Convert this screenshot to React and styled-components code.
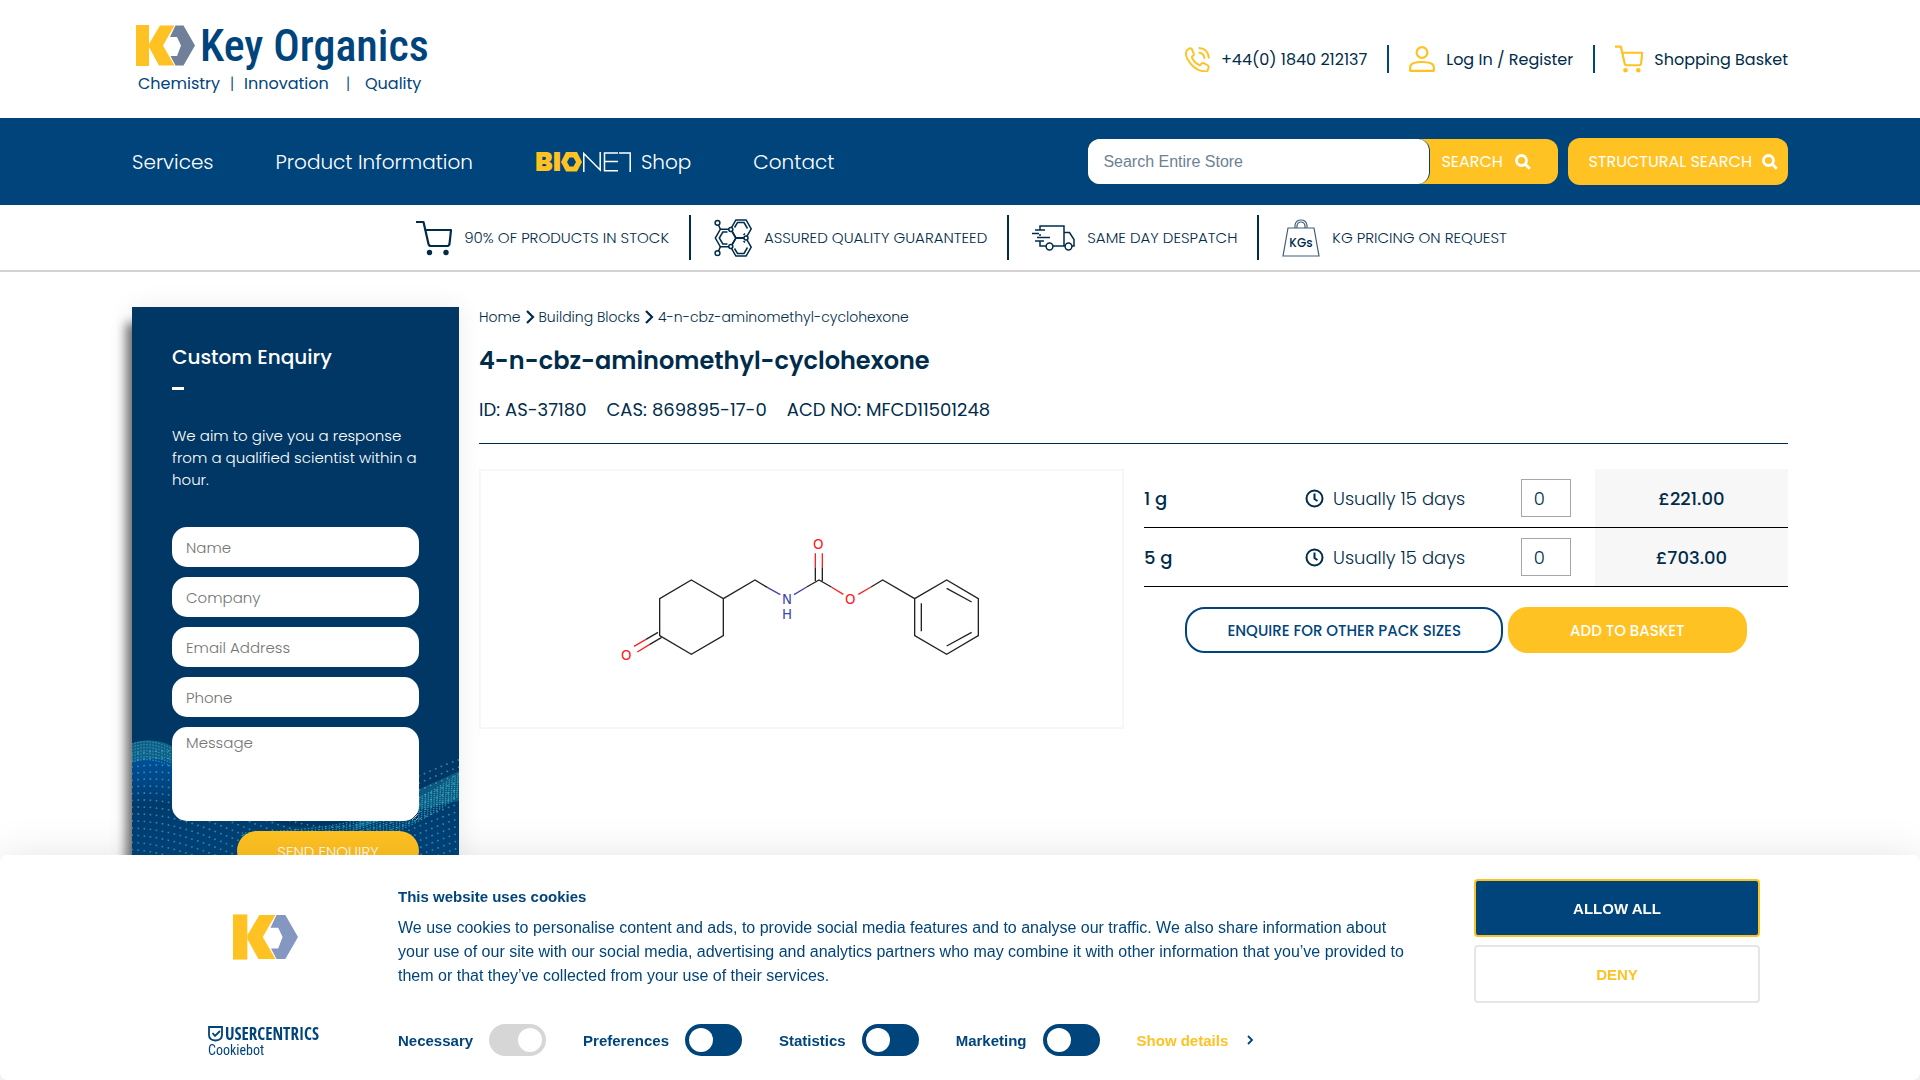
import React from 'react';
import styled, { createGlobalStyle, css } from 'styled-components';

const navy = '#002c4b';
const blue = '#00447c';
const deep = '#003764';
const gold = '#ffc222';
const sans = `'Poppins', Inter, 'Open Sans', sans-serif`;
const arial = `'Liberation Sans', Arial, sans-serif`;

const GlobalStyle = createGlobalStyle`
  *, *::before, *::after { box-sizing: border-box; }
  body { margin: 0; background: #fff; }
  h1, h2, p, ul, dl, dd, dt { margin: 0; padding: 0; }
  a { color: inherit; text-decoration: none; }
  button, input, textarea { font-family: inherit; }
`;

const Page = styled.div`
  height: 100vh;
  overflow: hidden;
  color: ${navy};
  font-family: ${sans};
  font-size: 16px;
  font-weight: 300;
`;

/* ---------- Header ---------- */

const Header = styled.header`
  display: flex;
  align-items: center;
  justify-content: space-between;
  height: 118px;
  padding: 0 132px;
`;

const LogoLink = styled.a`
  display: flex;
  padding-left: 4px;
`;

const Tools = styled.div`
  display: flex;
  align-items: center;
`;

const Tool = styled.a`
  display: flex;
  align-items: center;
  gap: 11px;
  height: 28px;
  padding-left: 20px;
  font-weight: 400;
  & + & {
    margin-left: 20px;
    border-left: 2px solid ${blue};
  }
`;

const NavBar = styled.div`
  display: flex;
  align-items: center;
  justify-content: space-between;
  height: 87px;
  padding: 0 132px;
  background: ${blue};
`;

const NavLinks = styled.nav`
  display: flex;
  align-items: center;
  gap: 62px;
  color: #fff;
  font-size: 20px;
`;

const NavLink = styled.a`
  display: flex;
  align-items: center;
  gap: 10px;
`;

const SearchArea = styled.div`
  display: flex;
  align-items: center;
  gap: 10px;
`;

const SearchForm = styled.form`
  display: flex;
  width: 470px;
  height: 45px;
  border-radius: 12px;
  background: ${gold};
`;

const SearchInput = styled.input`
  width: 342px;
  padding: 0 15px;
  border: 1px solid ${blue};
  border-width: 0 1px 0 0;
  border-radius: 12px;
  background: #fff;
  font-family: ${arial};
  font-size: 16px;
  outline: none;
  &::placeholder { color: #6c8296; opacity: 1; }
`;

const searchButton = css`
  display: flex;
  align-items: center;
  border: 0;
  background: transparent;
  color: #fff;
  cursor: pointer;
  font-size: 16px;
  font-weight: 400;
`;

const SearchSubmit = styled.button`
  ${searchButton}
  gap: 12px;
  padding: 0 11px;
`;

const StructuralButton = styled.button`
  ${searchButton}
  gap: 10px;
  height: 47px;
  padding: 0 10px 0 20px;
  border-radius: 12px;
  background: ${gold};
`;

const Usps = styled.ul`
  display: flex;
  align-items: center;
  justify-content: center;
  height: 67px;
  border-bottom: 2px solid #d3d3d3;
  list-style: none;
`;

const Usp = styled.li`
  display: flex;
  align-items: center;
  gap: 12px;
  height: 45px;
  padding: 0 20px 0 23px;
  font-size: 15px;
  & + & { border-left: 2px solid ${navy}; }
`;

/* ---------- Body ---------- */

const Main = styled.main`
  display: grid;
  grid-template-columns: 327px minmax(0, 1fr);
  gap: 20px;
  align-items: start;
  padding: 35px 132px 0;
`;

const Enquiry = styled.aside`
  position: relative;
  padding: 37px 40px 40px;
  background: ${deep};
  box-shadow: -10px 12px 10px -4px rgba(0, 0, 0, 0.55), 0 0 24px rgba(0, 0, 0, 0.08);
  color: #fff;
`;

const Waves = styled.svg`
  position: absolute;
  left: 0;
  bottom: 0;
  width: 100%;
  height: 190px;
`;

const EnquiryTitle = styled.h2`
  font-size: 20px;
  font-weight: 500;
  line-height: 26px;
`;

const Dash = styled.div`
  width: 12px;
  height: 3px;
  margin: 17px 0 35px;
  background: #fff;
`;

const EnquiryText = styled.p`
  margin-bottom: 36px;
  font-size: 15px;
  line-height: 22px;
`;

const EnquiryForm = styled.form`
  position: relative;
  display: flex;
  flex-direction: column;
  gap: 10px;
`;

const field = css`
  display: block;
  width: 100%;
  border: 0;
  border-radius: 15px;
  background: #fff;
  color: ${navy};
  font-size: 15px;
  font-weight: 300;
  outline: none;
  &::placeholder { color: #757575; opacity: 1; }
`;

const Field = styled.input`
  ${field}
  height: 40px;
  padding: 0 14px;
`;

const Area = styled.textarea`
  ${field}
  height: 94px;
  padding: 4px 14px;
`;

const SendButton = styled.button`
  align-self: flex-end;
  width: 182px;
  height: 40px;
  border: 0;
  border-radius: 20px;
  background: ${gold};
  color: #fff;
  font-size: 15px;
  font-weight: 300;
`;

const Crumbs = styled.nav`
  display: flex;
  align-items: center;
  gap: 3px;
  height: 20px;
  font-size: 14px;
`;

const ProductTitle = styled.h1`
  margin-top: 18px;
  font-size: 24px;
  font-weight: 600;
  line-height: 32px;
`;

const Codes = styled.dl`
  display: flex;
  gap: 20px;
  padding: 21px 0;
  border-bottom: 1px solid ${navy};
  font-size: 18px;
  font-weight: 400;
  line-height: 24px;
`;

const Code = styled.div`
  display: flex;
  gap: 5px;
`;

const Columns = styled.div`
  display: grid;
  grid-template-columns: minmax(0, 645px) minmax(0, 644px);
  gap: 20px;
  align-items: start;
  justify-content: space-between;
  padding-top: 25px;
`;

const Figure = styled.div`
  display: flex;
  align-items: center;
  justify-content: center;
  height: 260px;
  border: 2px solid #f7f7f7;
`;

const Packs = styled.table`
  width: 100%;
  border-collapse: separate;
  border-spacing: 0;
  table-layout: fixed;
  font-size: 18px;
`;

const PackCell = styled.td`
  width: ${(p) => p.$w};
  height: 59px;
  padding: 0;
  border-bottom: 1px solid #000;
  text-align: ${(p) => p.$align || 'left'};
  font-weight: ${(p) => (p.$strong ? 500 : 300)};
  background: ${(p) => (p.$shade ? '#f7f7f7' : 'transparent')};
`;

const Lead = styled.span`
  display: flex;
  align-items: center;
  gap: 9px;
`;

const Qty = styled.input`
  display: block;
  width: 50px;
  height: 38px;
  padding: 0 12px;
  border: 1px solid #a6a6a6;
  background: #fff;
  color: ${navy};
  font-size: 18px;
  font-weight: 300;
`;

const Actions = styled.div`
  display: flex;
  justify-content: center;
  gap: 5px;
  padding-top: 20px;
`;

const Action = styled.button`
  height: 46px;
  padding: 0 ${(p) => (p.$outline ? '40px' : '60px')};
  border: 2px solid ${(p) => (p.$outline ? blue : gold)};
  border-radius: 20px;
  background: ${(p) => (p.$outline ? '#fff' : gold)};
  color: ${(p) => (p.$outline ? blue : '#fff')};
  font-size: 15px;
  font-weight: 500;
  white-space: nowrap;
`;

/* ---------- Cookie banner ---------- */

const Banner = styled.section`
  position: fixed;
  left: 0;
  right: 0;
  bottom: 0;
  display: grid;
  grid-template-columns: 266px minmax(0, 1fr) 286px;
  height: 225px;
  padding: 24px 160px 24px 132px;
  border-radius: 8px;
  background: #fff;
  box-shadow: 0 8px 48px rgba(0, 0, 0, 0.15);
  color: ${blue};
  font-family: ${arial};
  font-weight: 400;
`;

const BannerLogos = styled.div`
  display: flex;
  flex-direction: column;
  align-items: center;
  justify-content: space-between;
  padding-top: 35px;
`;

const BannerBody = styled.div`
  display: flex;
  flex-direction: column;
  justify-content: space-between;
  padding-right: 60px;
`;

const BannerTitle = styled.h2`
  padding-top: 8px;
  font-size: 15px;
  font-weight: 700;
  line-height: 20px;
`;

const BannerText = styled.p`
  padding-top: 9px;
  font-size: 16px;
  line-height: 24px;
`;

const Choices = styled.div`
  display: flex;
  align-items: center;
  gap: 37px;
`;

const Choice = styled.label`
  display: flex;
  align-items: center;
  gap: 16px;
  font-size: 15px;
  font-weight: 700;
`;

const Toggle = styled.input`
  appearance: none;
  width: 57px;
  height: 32px;
  margin: 0;
  padding: 4px;
  border-radius: 16px;
  background: ${blue};
  &::before {
    content: '';
    display: block;
    width: 24px;
    height: 24px;
    border-radius: 50%;
    background: #fff;
  }
  &:checked::before { margin-left: auto; }
  &:disabled { background: #d6d6d6; }
`;

const Details = styled.a`
  display: flex;
  align-items: center;
  gap: 19px;
  color: ${gold};
  font-size: 15px;
  font-weight: 700;
`;

const BannerButtons = styled.div`
  display: flex;
  flex-direction: column;
  gap: 8px;
`;

const BannerButton = styled.button`
  height: 58px;
  border: 2px solid ${(p) => (p.$primary ? gold : '#e6e6e6')};
  border-radius: 4px;
  background: ${(p) => (p.$primary ? blue : '#fff')};
  color: ${(p) => (p.$primary ? '#fff' : gold)};
  font-size: 15px;
  font-weight: 700;
`;

const LogoSlot = styled.div`
  align-self: ${(p) => (p.$centre ? 'center' : 'flex-start')};
  padding-left: ${(p) => (p.$centre ? '0' : '76px')};
  line-height: 0;
`;

/* ---------- Drawings ---------- */

const Mark = ({ grey }) => (
  <>
    <rect width="13" height="41" fill={gold} />
    <path d="M24 .5h14.500L27 20.500l11.500 20H23L13 22v-3z" fill={gold} />
    <path d="M39.500.5h8L59 20.500l-11.500 20h-8l-5-9.500 H41l4-10.500L41 12h-7z" fill={grey} />
  </>
);

const SiteLogo = () => (
  <svg width="300" height="90" viewBox="0 -10 300 90" role="img" aria-label="Key Organics">
    <g transform="translate(0 1)"><Mark grey="#70809a" /></g>
    <text x="64" y="37" fill={blue} fontFamily="'Roboto Condensed', Lato, sans-serif" fontSize="44" fontWeight="500">Key Organics</text>
    <g fill={blue} fontSize="16" fontWeight="400">
      <text x="2" y="65">Chemistry</text>
      <text x="94" y="65" fontWeight="300">|</text>
      <text x="108" y="65">Innovation</text>
      <text x="210" y="65" fontWeight="300">|</text>
      <text x="229" y="65">Quality</text>
    </g>
  </svg>
);

const PhoneIcon = () => (
  <svg width="25" height="25" viewBox="0 0 26 26" fill="none" stroke={gold} strokeWidth="2" strokeLinejoin="round" strokeLinecap="round">
    <path d="M2 3.500 4.500 1.500Q6 .800 7 2l2 4.500q.500 1.500-.500 2.500L7 10.500q2 5.500 8.500 8.500l2-2q1-.800 2-.200l4 2.200q1.500 1 1 2.500l-1 3q-.500 1-2 1Q12 25 6 17.500T1.200 6Q1.200 4.500 2 3.500z" />
    <path d="M15 1q9 1 9.800 10M15 6q4.600.700 5.200 5.500" />
  </svg>
);

const UserIcon = () => (
  <svg width="26" height="26" viewBox="0 0 26 26" fill="none" stroke={gold} strokeWidth="2.200">
    <circle cx="13" cy="6.500" r="5.400" />
    <path d="M1.200 24.800v-3.500q0-5.300 11.800-5.300t11.800 5.300v3.500z" strokeLinejoin="round" />
  </svg>
);

const CartIcon = ({ size, color, dots }) => (
  <svg width={size} height={size} viewBox="0 0 36 36" fill="none" stroke={color} strokeWidth={dots ? 2.800 : 2.200}>
    <path d="M0 2h7.500l5 22q.500 2 2.500 2h16q2 0 2.500-2L35 10H9.500" strokeLinejoin="round" />
    <circle cx="13.500" cy="32.500" r="1.600" fill={color} />
    <circle cx="30" cy="32.500" r="1.600" fill={color} />
  </svg>
);

const Magnifier = () => (
  <svg width="16" height="16" viewBox="0 0 16 16" fill="none" stroke="#fff" strokeWidth="2.800">
    <circle cx="6.500" cy="6.500" r="5" />
    <path d="m10.300 10.300 4.500 4.500" />
  </svg>
);

const BionetLogo = () => (
  <svg width="96" height="44" viewBox="0 -12 96 44" role="img" aria-label="BIONET">
    <text x="0" y="19" fill={gold} fontSize="26" fontWeight="900">BI</text>
    <path fillRule="evenodd" fill={gold} d="M31 0h11l5 10-5 9.500H31L26 10zM34.500 5.500 32 10l2.500 4.500h4L41 10l-2.500-4.500z" />
    <g fill="none" stroke="#fff" strokeWidth="1.500">
      <path d="M48.800 20V1.500L65.200 18V0" />
      <path d="M83 1H69.500v17.800H83M69.500 9.500H83" />
      <path d="M84 1h11.200v19" />
    </g>
  </svg>
);

const hex = (cx, cy, r) =>
  [0, 60, 120, 180, 240, 300]
    .map((a) => `${cx + r * Math.cos((a * Math.PI) / 180)},${cy + r * Math.sin((a * Math.PI) / 180)}`)
    .join(' ');

const MoleculeIcon = () => (
  <svg width="38" height="38" viewBox="0 0 38 38" fill="none" stroke={navy} strokeWidth="1.500">
    {[[11.500, 19], [27, 9.800], [27, 28.200]].map(([x, y]) => (
      <polygon key={`${x}-${y}`} points={hex(x, y, 10.200)} />
    ))}
    <path d="M13.500 13H8.800L5.300 19l3.500 6h4.700M20.500 8.500l3-5h6.500l3.500 6M31 14.500l-1.500 1.500M20.500 29.500l3 5h6.500l3.500-6M31 23.500l-1.500-1.500" />
    <path d="M4.500 6 6.500 10.500M4.500 32l2-4.500" />
    <g fill="#fff">
      <circle cx="3.500" cy="3.800" r="2.400" />
      <circle cx="3.500" cy="34.200" r="2.400" />
      <circle cx="16.800" cy="10.500" r="2" />
      <circle cx="16.800" cy="27.500" r="2" />
      <circle cx="32" cy="19" r="2" />
    </g>
  </svg>
);

const TruckIcon = () => (
  <svg width="43" height="26" viewBox="0 0 43 26" fill="none" stroke={navy} strokeWidth="1.500">
    <path d="M8 5V1h24v20H21M14 21H8v-5M8 9v2M32 7.500h5.500l4.500 7V21h-2M33 21h-1M3 5h10M0 8.500h7M5 12.500h13M3 16h9" />
    <circle cx="17.500" cy="21.500" r="3.400" />
    <circle cx="36.500" cy="21.500" r="3.400" />
  </svg>
);

const WeightIcon = () => (
  <svg width="38" height="38" viewBox="0 0 38 38" fill="none" stroke="#3f6078" strokeWidth="1.200">
    <path d="M6 9h26l5 28H1zM13 9V6q1-5 6-5t6 5v3M15 9V6.500q.800-3.500 4-3.500t4 3.500V9" />
    <text x="19" y="28" textAnchor="middle" fill={navy} stroke="none" fontSize="12" fontWeight="500">KGs</text>
  </svg>
);

const CrumbChevron = () => (
  <svg width="12" height="16" viewBox="0 0 12 16" fill="none" stroke={navy} strokeWidth="2.200">
    <path d="m3 2 6 6-6 6" />
  </svg>
);

const ClockIcon = () => (
  <svg width="19" height="19" viewBox="0 0 19 19" fill="none" stroke={navy} strokeWidth="2">
    <circle cx="9.500" cy="9.500" r="8" />
    <path d="M9.500 4.500v5.500l3 2" />
  </svg>
);

const Molecule = () => (
  <svg width="420" height="170" viewBox="6 12 1260 510" fill="none" strokeWidth="4" role="img" aria-label="Chemical structure">
    <g stroke="#222">
      <path d="M209 377V266l95-56 96 56v111l-96 56zM400 266l95-56 38 23M650 231l37-21 37 21M676 213v-41M697 213v-41M843 231l35-21 96 56M974 266l96-56 95 56v111l-95 56-96-56zM994 280v84M1070 235l75 41M1070 408l75-41M204 367l-36 21M214 383l-36 21" />
    </g>
    <path stroke="#4444aa" d="m533 233 38 21M612 254l38-23" />
    <path stroke="#ff2020" d="M676 172v-42M697 172v-42M724 231l36 22M805 253l38-22M168 388l-36 21M178 404l-36 22" />
    <g textAnchor="middle" fontSize="40" fontWeight="400" fontFamily="'DejaVu Sans', sans-serif">
      <text x="685" y="117" fill="#ff2020" stroke="none">O</text>
      <text x="781" y="283" fill="#ff2020" stroke="none">O</text>
      <text x="109" y="451" fill="#ff2020" stroke="none">O</text>
      <text x="591" y="281" fill="#4444aa" stroke="none">N</text>
      <text x="591" y="328" fill="#4444aa" stroke="none">H</text>
    </g>
  </svg>
);

const crest = (x, depth) => 20 + depth + 24 * (1 - Math.cos((x - 30) / 55));

const dotRows = Array.from({ length: 24 }, (_, r) => {
  const points = [];
  for (let x = -6; x <= 333; x += 6) {
    const y = crest(x * (1 - r * 0.012) + r * 3, 10 + r * 7);
    points.push(`${x} ${y.toFixed(1)}`);
  }
  return `M${points.join('L')}`;
});

const ridge = Array.from({ length: 12 }, (_, r) => {
  const points = [];
  for (let x = 110; x <= 330; x += 6) {
    const t = (x - 110) / 220;
    points.push(`${x} ${(112 - 10 * t - 52 * t * t * t + r * 2.5 * (1 - t * 0.2)).toFixed(1)}`);
  }
  return `M${points.join('L')}`;
});

const EnquiryWaves = () => (
  <Waves viewBox="0 0 327 190" preserveAspectRatio="none" aria-hidden="true">
    <defs>
      <linearGradient id="sea" x1="0" y1="0" x2="0" y2="1">
        <stop offset="0" stopColor="#0057a8" stopOpacity="0.750" />
        <stop offset="0.300" stopColor="#003a6c" />
        <stop offset="1" stopColor="#00508c" />
      </linearGradient>
    </defs>
    <path fill="#0f5f88" d="M0 22Q26 14 48 30L66 56Q30 30 0 42z" />
    <path fill="url(#sea)" d="M0 42Q26 30 60 52T150 104Q200 112 250 92T327 78V190H0z" />
    <path fill="#12668f" opacity="0.700" d="M327 50Q290 68 262 78T220 110Q280 88 327 80z" />
    <g fill="none" stroke="#46bccb" strokeLinecap="round">
      {dotRows.map((d, i) => (
        <path key={i} d={d} strokeWidth="1.800" strokeDasharray="0.100 6" opacity="0.600" />
      ))}
      {ridge.map((d, i) => (
        <path key={i} d={d} strokeWidth="1.200" strokeDasharray="0.500 3" opacity="0.700" />
      ))}
      {[0, 3, 6, 9, 12, 15, 18].map((o) => (
        <path key={o} d={`M0 ${23 + o}Q26 ${14 + o} 60 ${40 + o}`} strokeWidth="1" strokeDasharray="0.500 2.500" opacity="0.800" />
      ))}
    </g>
  </Waves>
);

const BannerMark = () => (
  <svg width="65" height="46" viewBox="0 0 59 41" aria-hidden="true"><Mark grey="#8497c0" /></svg>
);

const UsercentricsLogo = () => (
  <svg width="126" height="40" viewBox="0 -8 126 40" role="img" aria-label="Usercentrics Cookiebot">
    <path d="M1 3h13v8q0 5-6.500 5.500Q1 16 1 11zM4.500 9l2.500 3 5-5" fill="none" stroke={blue} strokeWidth="1.800" />
    <g fill={blue}>
      <text x="17" y="16" fontFamily="'Open Sans Condensed', 'Roboto Condensed', sans-serif" fontSize="17" fontWeight="700">USERCENTRICS</text>
      <text x="0" y="31" fontFamily="'Roboto Condensed', sans-serif" fontSize="14" fontWeight="400">Cookiebot</text>
    </g>
  </svg>
);

/* ---------- Page ---------- */

const fields = [
  ['Name', 'text'],
  ['Company', 'text'],
  ['Email Address', 'email'],
  ['Phone', 'tel'],
];

const packs = [
  ['1 g', '£221.00'],
  ['5 g', '£703.00'],
];

export default function App() {
  return (
    <Page>
      <GlobalStyle />
      <Header>
        <LogoLink href="#"><SiteLogo /></LogoLink>
        <Tools>
          <Tool href="#"><PhoneIcon />+44(0) 1840 212137</Tool>
          <Tool href="#"><UserIcon />Log In / Register</Tool>
          <Tool href="#"><CartIcon size={28} color={gold} dots />Shopping Basket</Tool>
        </Tools>
      </Header>
      <NavBar>
        <NavLinks>
          <NavLink href="#">Services</NavLink>
          <NavLink href="#">Product Information</NavLink>
          <NavLink href="#"><BionetLogo />Shop</NavLink>
          <NavLink href="#">Contact</NavLink>
        </NavLinks>
        <SearchArea>
          <SearchForm>
            <SearchInput aria-label="Search Entire Store" placeholder="Search Entire Store" />
            <SearchSubmit type="button">SEARCH <Magnifier /></SearchSubmit>
          </SearchForm>
          <StructuralButton type="button">STRUCTURAL SEARCH <Magnifier /></StructuralButton>
        </SearchArea>
      </NavBar>
      <Usps>
        <Usp><CartIcon size={36} color={navy} />90% OF PRODUCTS IN STOCK</Usp>
        <Usp><MoleculeIcon />ASSURED QUALITY GUARANTEED</Usp>
        <Usp><TruckIcon />SAME DAY DESPATCH</Usp>
        <Usp><WeightIcon />KG PRICING ON REQUEST</Usp>
      </Usps>
      <Main>
        <Enquiry>
          <EnquiryWaves />
          <EnquiryTitle>Custom Enquiry</EnquiryTitle>
          <Dash />
          <EnquiryText>We aim to give you a response from a qualified scientist within a hour.</EnquiryText>
          <EnquiryForm>
            {fields.map(([label, type]) => (
              <Field key={label} type={type} aria-label={label} placeholder={label} />
            ))}
            <Area aria-label="Message" placeholder="Message" />
            <SendButton type="button">SEND ENQUIRY</SendButton>
          </EnquiryForm>
        </Enquiry>
        <div>
          <Crumbs aria-label="Breadcrumb">
            <a href="#">Home</a>
            <CrumbChevron />
            <a href="#">Building Blocks</a>
            <CrumbChevron />
            <span>4-n-cbz-aminomethyl-cyclohexone</span>
          </Crumbs>
          <ProductTitle>4-n-cbz-aminomethyl-cyclohexone</ProductTitle>
          <Codes>
            <Code><dt>ID:</dt><dd>AS-37180</dd></Code>
            <Code><dt>CAS:</dt><dd>869895-17-0</dd></Code>
            <Code><dt>ACD NO:</dt><dd>MFCD11501248</dd></Code>
          </Codes>
          <Columns>
            <Figure><Molecule /></Figure>
            <div>
              <Packs>
                <tbody>
                  {packs.map(([size, price]) => (
                    <tr key={size}>
                      <PackCell $w="25%" $strong>{size}</PackCell>
                      <PackCell><Lead><ClockIcon />Usually 15 days</Lead></PackCell>
                      <PackCell $w="74px"><Qty type="text" defaultValue="0" aria-label={`Quantity of ${size}`} /></PackCell>
                      <PackCell $w="30%" $align="center" $strong $shade>{price}</PackCell>
                    </tr>
                  ))}
                </tbody>
              </Packs>
              <Actions>
                <Action type="button" $outline>ENQUIRE FOR OTHER PACK SIZES</Action>
                <Action type="button">ADD TO BASKET</Action>
              </Actions>
            </div>
          </Columns>
        </div>
      </Main>
      <Banner aria-label="Cookie consent">
        <BannerLogos>
          <LogoSlot $centre><BannerMark /></LogoSlot>
          <LogoSlot><UsercentricsLogo /></LogoSlot>
        </BannerLogos>
        <BannerBody>
          <div>
            <BannerTitle>This website uses cookies</BannerTitle>
            <BannerText>
              We use cookies to personalise content and ads, to provide social media features and to analyse our traffic. We also share information about your use of our site with our social media, advertising and analytics partners who may combine it with other information that you’ve provided to them or that they’ve collected from your use of their services.
            </BannerText>
          </div>
          <Choices>
            <Choice>Necessary<Toggle type="checkbox" defaultChecked disabled /></Choice>
            <Choice>Preferences<Toggle type="checkbox" /></Choice>
            <Choice>Statistics<Toggle type="checkbox" /></Choice>
            <Choice>Marketing<Toggle type="checkbox" /></Choice>
            <Details href="#">
              Show details
              <svg width="7" height="10" viewBox="0 0 7 10" fill="none" stroke={blue} strokeWidth="1.800"><path d="m1 1 4 4-4 4" /></svg>
            </Details>
          </Choices>
        </BannerBody>
        <BannerButtons>
          <BannerButton type="button" $primary>ALLOW ALL</BannerButton>
          <BannerButton type="button">DENY</BannerButton>
        </BannerButtons>
      </Banner>
    </Page>
  );
}
